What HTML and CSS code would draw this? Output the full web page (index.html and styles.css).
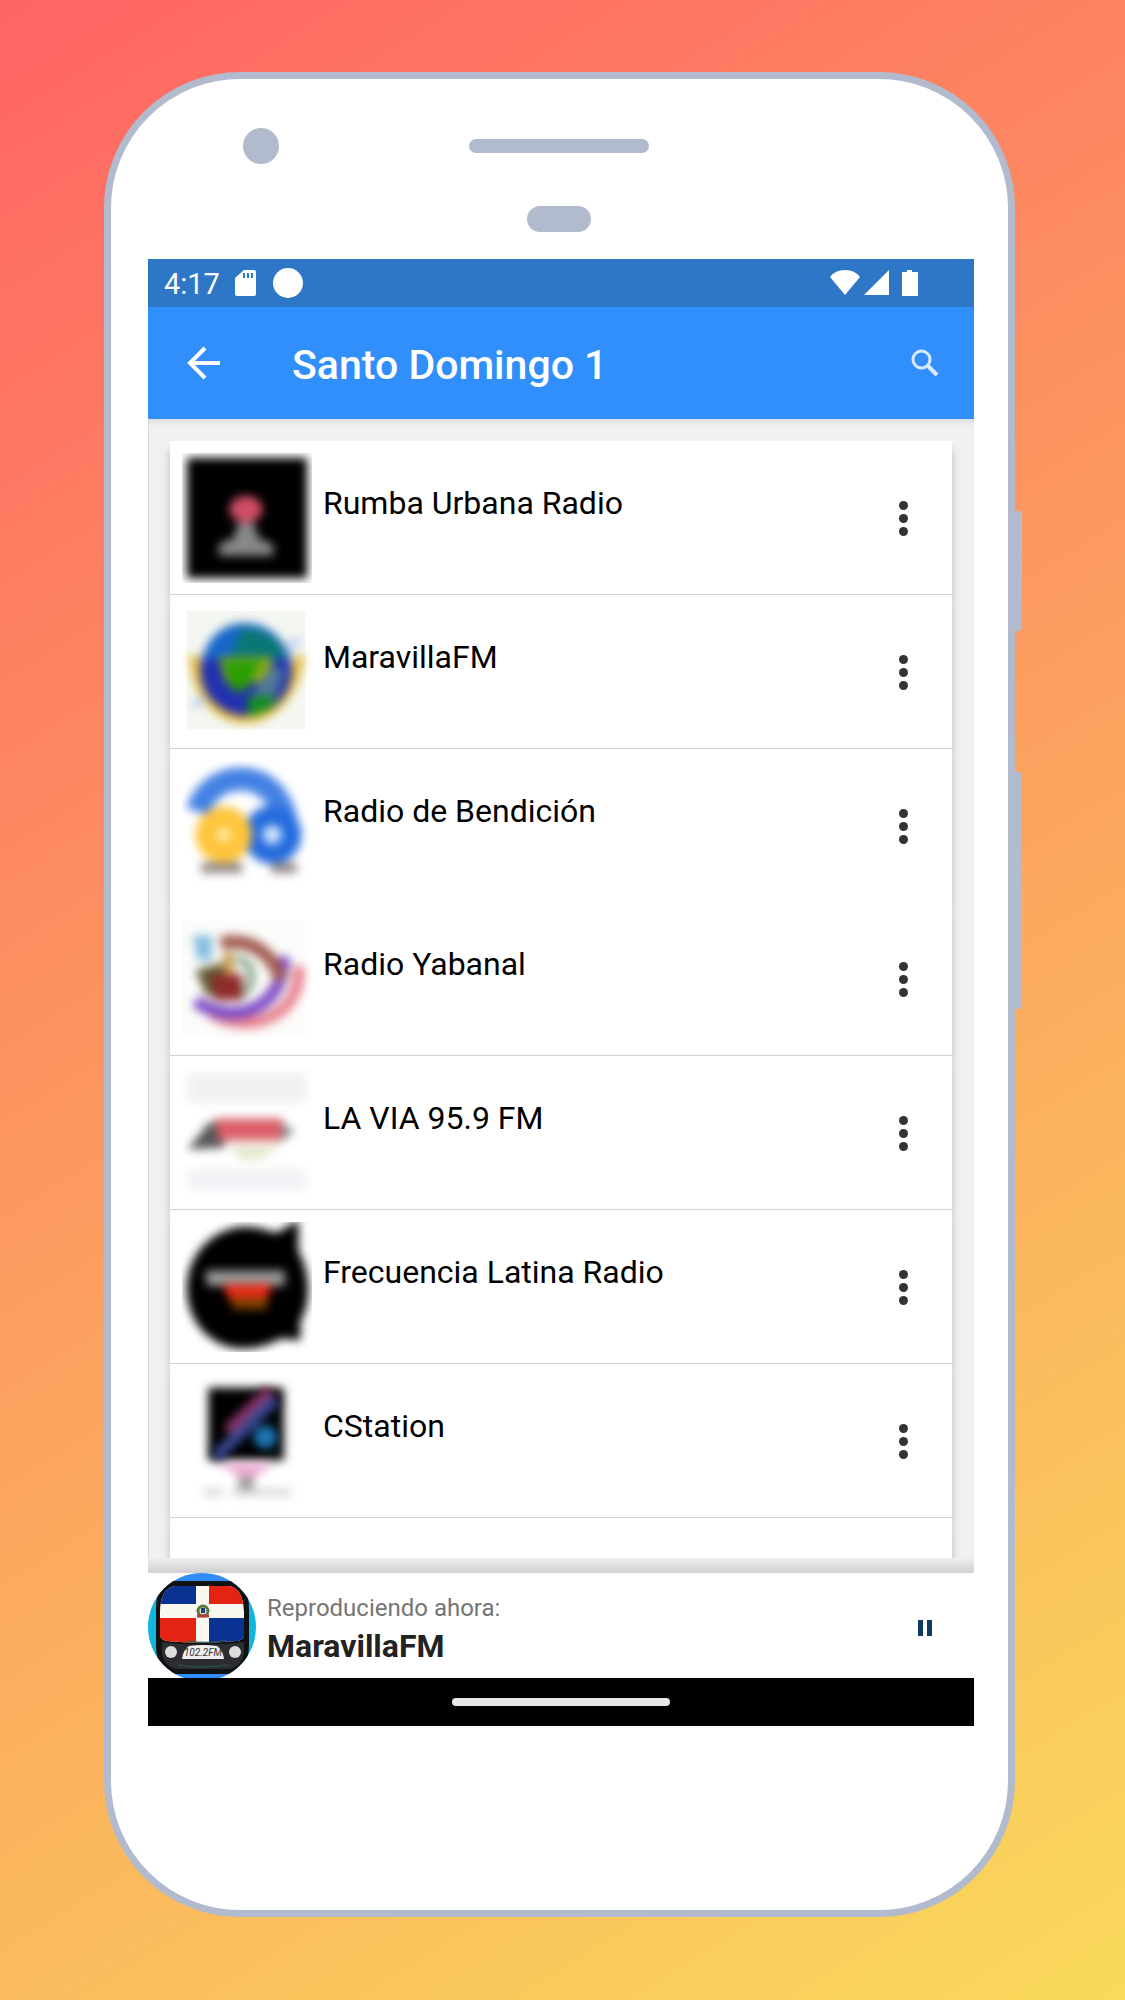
FILE: index.html
```html
<!DOCTYPE html>
<html lang="es">
<head>
<meta charset="utf-8">
<meta name="viewport" content="width=device-width, initial-scale=1">
<title>Santo Domingo 1</title>
<link rel="stylesheet" href="styles.css">
</head>
<body>
<div class="phone">
  <span class="side-button power"></span>
  <span class="side-button volume"></span>
  <div class="bezel">
    <span class="camera"></span>
    <span class="speaker"></span>
    <span class="sensor"></span>
  </div>
  <div class="screen">
    <div class="status-bar">
      <span class="clock">4:17</span>
      <svg class="sd" width="22" height="26" viewBox="0 0 22 26"><path fill="#fff" fill-rule="evenodd" d="M9 0h10q2 0 2 2v22q0 2-2 2H2q-2 0-2-2V8zM8 3v5h2V3zm4 0v5h2V3zm4 0v5h2V3z"/></svg>
      <svg width="30" height="30" viewBox="0 0 30 30"><circle cx="15" cy="15" r="15" fill="#fff"/></svg>
      <span class="status-icons">
        <svg width="30" height="26" viewBox="0 0 30 26"><path fill="#fff" d="M0 7Q5 0 15 0t15 7L15 25z"/></svg>
        <svg width="26" height="26" viewBox="0 0 26 26"><path fill="#fff" d="M0 25L25 0v25z"/></svg>
        <svg width="16" height="26" viewBox="0 0 16 26"><path fill="#fff" d="M0 2h5V0h5v2h6v24H0z"/></svg>
      </span>
    </div>
    <header class="app-bar">
      <button class="icon-button" type="button" aria-label="Atrás">
        <svg width="34" height="34" viewBox="0 0 34 34" fill="none" stroke="#fff" stroke-width="4"><path d="M18 2L3 17l15 15M3 17h30"/></svg>
      </button>
      <h1>Santo Domingo 1</h1>
      <button class="icon-button search" type="button" aria-label="Buscar">
        <svg width="28" height="28" viewBox="0 0 28 28" fill="none" stroke="#d9eaff" stroke-width="3"><circle cx="10.500" cy="10.500" r="8.500"/><path stroke-width="4" d="M17 17l9 9"/></svg>
      </button>
    </header>
    <main class="content">
      <ul class="stations">
        <li>
          <svg class="logo" viewBox="0 0 134 134">
            <defs><filter id="soft" x="-20%" y="-20%" width="140%" height="140%" color-interpolation-filters="sRGB"><feGaussianBlur stdDeviation="5"/></filter><filter id="edge" x="-20%" y="-20%" width="140%" height="140%" color-interpolation-filters="sRGB"><feGaussianBlur stdDeviation="5"/></filter></defs>
            <rect x="5" y="5" width="124" height="124" fill="#000" filter="url(#edge)"/>
            <g filter="url(#soft)"><ellipse cx="66" cy="58" rx="17" ry="14" fill="#d04e66"/><path fill="#888" d="M58 72h16l5 16 15 6v12H38V94l15-6z"/></g>
          </svg>
          <span class="name">Rumba Urbana Radio</span>
          <button class="more" type="button" aria-label="Opciones"><i></i><i></i><i></i></button>
        </li>
        <li>
          <svg class="logo" viewBox="0 0 134 134">
            <rect x="5" y="4" width="122" height="122" fill="#f4f7f1"/>
            <g filter="url(#soft)"><path fill="none" stroke="#e3b935" stroke-width="10" d="M13 50c4 86 98 86 108 0"/><circle cx="66" cy="65" r="47" fill="#2230b0"/><path fill="#1766c8" d="M22 54c7-50 78-50 88 0z"/><path fill="#0b7775" d="M62 22c30 0 42 18 46 30H50z"/><path fill="#8faa18" d="M38 52h55v26H45z"/><path fill="#28a000" d="M42 56h40L65 86H52z"/><path fill="#50789c" d="M92 60l14 6-10 26H72z"/><path fill="#138e20" d="M68 92h30c-8 18-18 18-30 20z"/><path stroke="#bccdf2" stroke-width="8" d="M108 45l12-12M12 102l11-8"/></g>
          </svg>
          <span class="name">MaravillaFM</span>
          <button class="more" type="button" aria-label="Opciones"><i></i><i></i><i></i></button>
        </li>
        <li class="joined">
          <svg class="logo" viewBox="0 0 134 134">
            <g filter="url(#soft)"><path fill="none" stroke="#4481e4" stroke-width="24" d="M16 52c16-50 92-46 92 24"/><circle cx="93" cy="76" r="20" fill="#cfe3ff" stroke="#246bdd" stroke-width="20"/><circle cx="43" cy="76" r="18" fill="#ffefb0" stroke="#ffc53c" stroke-width="22"/><path stroke="#948784" stroke-width="11" d="M20 110h42M92 110h26"/></g>
          </svg>
          <span class="name">Radio de Bendición</span>
          <button class="more" type="button" aria-label="Opciones"><i></i><i></i><i></i></button>
        </li>
        <li>
          <svg class="logo" viewBox="0 0 134 134">
            <rect x="0" y="6" width="127" height="121" fill="#fcfcfa"/>
            <g filter="url(#soft)"><path fill="none" stroke="#e8808e" stroke-width="12" d="M30 102c38 24 94 4 90-48"/><path fill="none" stroke="#7d4bc5" stroke-width="13" d="M14 90c38 26 90 10 91-46"/><path fill="none" stroke="#a05a4f" stroke-width="14" d="M40 30c36-6 54 14 62 38"/><path fill="none" stroke="#85a58b" stroke-width="8" d="M56 47c24 0 18 42-4 36"/><path fill="#5f5a32" d="M14 58l30-8v40l-20-8z"/><path fill="#8e2a2a" d="M30 62h32v27H34z"/><path stroke="#c89b50" stroke-width="11" d="M48 40v22"/><path fill="#86bedf" d="M11 22h20v26H16z"/></g>
          </svg>
          <span class="name">Radio Yabanal</span>
          <button class="more" type="button" aria-label="Opciones"><i></i><i></i><i></i></button>
        </li>
        <li>
          <svg class="logo" viewBox="0 0 134 134">
            <g filter="url(#edge)"><rect x="6" y="4" width="122" height="32" fill="#eff1f3"/><rect x="6" y="104" width="122" height="22" fill="#f1f2f5"/></g>
            <g filter="url(#soft)"><path fill="#555" d="M6 84l22-28h16v26z"/><path fill="#dc5f69" d="M34 52h70v23H38z"/><path fill="#888" d="M102 56l14 9-14 11z"/><path fill="#e3e8cb" d="M48 80h54L82 94H60z"/></g>
          </svg>
          <span class="name">LA VIA 95.9 FM</span>
          <button class="more" type="button" aria-label="Opciones"><i></i><i></i><i></i></button>
        </li>
        <li>
          <svg class="logo" viewBox="0 0 134 134">
            <path filter="url(#edge)" d="M66 5c15 0 22 5 32 6L120-2v32c13 23 13 54 2 72v20l-20-2C50 148 5 116 5 68 5 33 33 5 66 5z"/>
            <g filter="url(#soft)"><path fill="#999" d="M24 50h82v16H26z"/><path fill="#e82a18" d="M42 64h52l-7 16H48z"/><path fill="#804200" d="M50 78h38v12H52z"/></g>
          </svg>
          <span class="name">Frecuencia Latina Radio</span>
          <button class="more" type="button" aria-label="Opciones"><i></i><i></i><i></i></button>
        </li>
        <li>
          <svg class="logo" viewBox="0 0 134 134">
            <rect x="27" y="12" width="78" height="75" filter="url(#edge)"/>
            <g filter="url(#soft)"><path stroke="#913468" stroke-width="15" d="M48 58l44-42"/><path stroke="#3a4894" stroke-width="12" d="M34 84l62-60"/><circle cx="86" cy="63" r="12" fill="#1b78b5"/><path fill="#efaad2" d="M38 90h56L68 110z"/><path fill="#999" d="M58 104h16v17H58z"/><path stroke="#d5d5d5" stroke-width="7" d="M22 120h20m10 0h60"/></g>
          </svg>
          <span class="name">CStation</span>
          <button class="more" type="button" aria-label="Opciones"><i></i><i></i><i></i></button>
        </li>
        <li class="partial"></li>
      </ul>
      <div class="fade"></div>
    </main>
    <section class="player">
      <svg class="cover" viewBox="0 0 108 105">
        <defs>
          <clipPath id="disc"><circle cx="54" cy="54" r="54"/></clipPath>
          <linearGradient id="ring" x2="0" y2="1"><stop offset="0" stop-color="#328dfa"/><stop offset=".15" stop-color="#328dfa"/><stop offset=".3" stop-color="#12b5dc"/><stop offset=".8" stop-color="#12b5dc"/><stop offset=".95" stop-color="#328dfa"/></linearGradient>
          <clipPath id="tube"><path d="M27 13h54q14 2 15 26v25q-2 3-7 4Q53 71 18 68q-5-2-6-5V39q0-23 15-26z"/></clipPath>
        </defs>
        <g clip-path="url(#disc)">
          <rect width="108" height="108" fill="url(#ring)"/>
          <path fill="#111" d="M25 8h60q16 3 16 28v37q0 20-18 28H26Q8 95 8 74V35Q8 12 25 8z"/>
          <path fill="#2c2d30" d="M14 69q40 5 82 0v12q-2 12-14 15H28q-12-3-14-15z"/>
          <g clip-path="url(#tube)"><rect width="108" height="80" fill="#f8f8f0"/><path fill="#0a3292" d="M10 10h38v21H10zM61 45h38v28H61z"/><path fill="#e42312" d="M61 10h38v21H61zM10 45h38v28H10z"/></g>
          <circle cx="55" cy="38" r="5" fill="#ddd" stroke="#547c3b" stroke-width="3"/><path stroke="#b23c35" stroke-width="3" d="M49 43h12"/><path fill="#253a77" d="M53 35h4v5h-4z"/>
          <circle cx="23" cy="79" r="6" fill="#ddd"/><circle cx="87" cy="79" r="6" fill="#ddd"/>
          <path fill="#eee" d="M41 73q14-2 28 0 6 4 7 13H34q1-9 7-13z"/>
          <text x="55" y="83" text-anchor="middle" class="dial">102.2FM</text>
          <path fill="none" stroke="#285d50" stroke-width="1" d="M40 68q20 3 38-1M30 92q25 4 50 0"/>
        </g>
      </svg>
      <div class="now">
        <p class="label">Reproduciendo ahora:</p>
        <p class="title">MaravillaFM</p>
      </div>
      <button class="pause" type="button" aria-label="Pausar"><svg width="14" height="16" viewBox="0 0 14 16"><path fill="#0e3a60" d="M0 0h5v16H0zM9 0h5v16H9z"/></svg></button>
    </section>
    <div class="nav-bar"><span></span></div>
  </div>
</div>
</body>
</html>
```
FILE: styles.css
```css
* {
  box-sizing: border-box;
}

body {
  margin: 0;
  min-height: 100vh;
  padding: 72px 110px 83px 104px;
  font-family: Roboto, "Liberation Sans", sans-serif;
  background: linear-gradient(148deg, #ff6464, #f9da5b);
}

h1,
p,
ul {
  margin: 0;
  padding: 0;
}

button {
  padding: 0;
  border: 0;
  background: none;
  cursor: pointer;
}

svg {
  display: block;
  flex: none;
}

.phone {
  position: relative;
  padding: 0 34px 184px 37px;
  background: #fff;
  border: 7px solid #b1bbcd;
  border-radius: 136px;
}

.side-button {
  position: absolute;
  left: 100%;
  width: 14px;
  background: #b1bbcd;
  border-radius: 0 3px 3px 0;
}

.power {
  top: 432px;
  height: 120px;
}

.volume {
  top: 693px;
  height: 237px;
}

/* Camera, speaker and sensor share one three-column grid */
.bezel {
  display: grid;
  grid-template-columns: 1fr 180px 1fr;
  grid-template-rows: 36px 26px;
  row-gap: 42px;
  align-items: center;
  justify-items: center;
  height: 180px;
  padding: 49px 4px 0 0;
}

.camera {
  justify-self: start;
  margin-left: 95px;
  width: 36px;
  height: 36px;
  border-radius: 50%;
  background: #b1bbcd;
}

.speaker {
  width: 180px;
  height: 14px;
  border-radius: 7px;
  background: #b1bbcd;
}

.sensor {
  grid-row: 2;
  grid-column: 2;
  width: 64px;
  height: 26px;
  border-radius: 13px;
  background: #b1bbcd;
}

.status-bar {
  display: flex;
  align-items: center;
  height: 48px;
  padding: 0 56px 0 16px;
  background: #2e76c6;
}

.clock {
  padding-top: 2px;
  color: #fff;
  font-size: 29px;
}

.sd {
  margin: 0 16px 0 15px;
}

.status-icons {
  display: flex;
  gap: 4px;
  margin-left: auto;
}

.status-icons svg:last-child {
  margin-left: 8px;
}

.app-bar {
  display: flex;
  align-items: center;
  height: 112px;
  padding: 0 25px 0 32px;
  background: #318ffb;
}

.icon-button {
  display: grid;
  place-items: center;
  width: 48px;
  height: 48px;
}

.search {
  margin-left: auto;
}

.app-bar h1 {
  margin-left: 64px;
  padding-top: 4px;
  color: #fff;
  font-size: 41px;
  font-weight: 500;
  line-height: 48px;
}

.content {
  padding-top: 22px;
  background: #f1f1f1;
  box-shadow: inset 0 6px 6px -4px #d8d4d4, inset 1px 0 #ddd;
}

.stations {
  margin: 0 22px;
  list-style: none;
}

.stations li {
  display: flex;
  height: 154px;
  padding: 12px 26px 0 12px;
  background: #fff;
  border-bottom: 1px solid #d2d2d2;
  box-shadow: -2px 8px 8px -1px #ccc, 2px 8px 8px -1px #ccc;
}

.stations .joined {
  height: 153px;
  border-bottom: 0;
}

.stations .partial {
  height: 40px;
  padding: 0;
  border: 0;
}

.logo {
  width: 130px;
  height: 130px;
}

.name {
  flex: 1;
  margin: 30px 0 0 11px;
  font-size: 32px;
  line-height: 40px;
  color: #000;
}

.more {
  display: flex;
  flex-direction: column;
  align-items: center;
  justify-content: center;
  gap: 4px;
  width: 46px;
  height: 130px;
}

.more i {
  width: 9px;
  height: 9px;
  border-radius: 50%;
  background: #333;
}

.fade {
  position: relative;
  height: 15px;
  background: linear-gradient(#efefef, #cfcfcf);
}

.player {
  display: flex;
  align-items: center;
  height: 105px;
  padding-right: 25px;
  background: #fff;
}

.cover {
  width: 108px;
  height: 105px;
}

.dial {
  font-size: 10px;
  font-style: italic;
  fill: #333;
}

.now {
  flex: 1;
  margin-left: 11px;
  padding-top: 4px;
}

.label {
  color: #757575;
  font-size: 24px;
  line-height: 36px;
}

.title {
  color: #222;
  font-size: 32px;
  font-weight: 700;
  line-height: 40px;
}

.pause {
  display: grid;
  place-items: center;
  width: 48px;
  height: 48px;
  margin-top: 4px;
}

.nav-bar {
  display: grid;
  place-items: center;
  height: 48px;
  background: #000;
}

.nav-bar span {
  width: 218px;
  height: 8px;
  border-radius: 4px;
  background: #e8e8e8;
}
```
